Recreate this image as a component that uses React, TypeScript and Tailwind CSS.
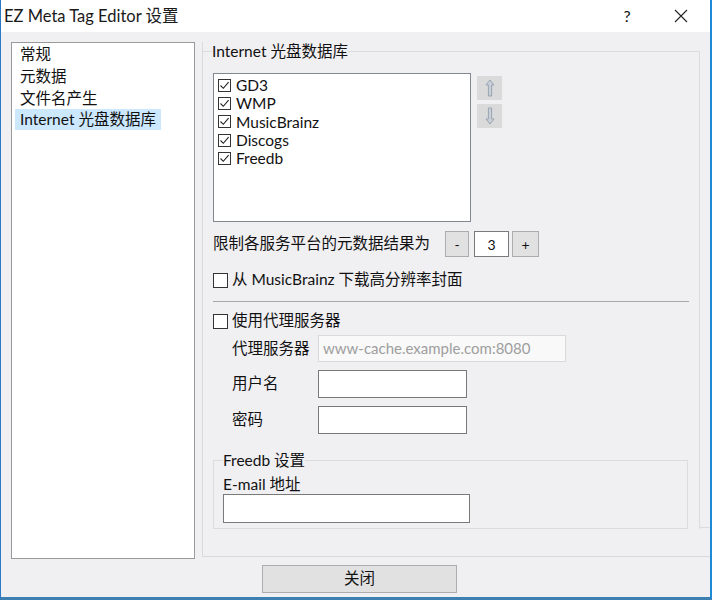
import React from "react";

const ui = "font-['Lato','Noto_Sans_CJK_SC',sans-serif]";

function CheckBox({checked, size}: {checked?: boolean; size: number}) {
	return (
		<span
			className="flex items-center justify-center bg-white border border-[#333333] shrink-0"
			style={{width: size, height: size}}>
			{checked && (
				<svg width={size - 2} height={size - 2} viewBox="0 0 11 11">
					<path d="M1.5 5.5 L4.3 8.3 L9.6 2.2" fill="none" stroke="#222" strokeWidth="1.1"/>
				</svg>
			)}
		</span>
	);
}

function Arrow({down}: {down?: boolean}) {
	return (
		<svg width="10" height="18" viewBox="0 0 10 18" style={down ? {transform: "rotate(180deg)"} : undefined}>
			<path d="M5 1 L9 6 L6.6 6 L6.6 17 L3.4 17 L3.4 6 L1 6 Z" fill="#c9d0d8" stroke="#98a4b0" strokeWidth="1"/>
		</svg>
	);
}

const sources = ["GD3", "WMP", "MusicBrainz", "Discogs", "Freedb"];
const pages = ["常规", "元数据", "文件名产生"];

function App() {
	return (
		<div className={`${ui} w-[712px] h-[600px] bg-[#f0eff2] text-[15.5px] text-[#111] flex flex-col border-l border-r-2 border-b-[3px] border-l-[#2a78c8] border-r-[#1e8ad6] border-b-[#3d7fb0] overflow-hidden`}>
			{/* title bar */}
			<div className="h-[32px] shrink-0 bg-white flex items-center pl-[3px]">
				<span className="text-[16.5px] text-[#1a1a1a]">EZ Meta Tag Editor 设置</span>
				<div className="ml-auto flex items-center mr-[6px] gap-[8px]">
					<div className="w-[46px] h-[32px] flex items-center justify-center text-[16px]">?</div>
					<div className="w-[46px] h-[32px] flex items-center justify-center">
						<svg width="14" height="14" viewBox="0 0 14 14">
							<path d="M1 1 L13 13 M13 1 L1 13" stroke="#222" strokeWidth="1.1"/>
						</svg>
					</div>
				</div>
			</div>

			<div className="flex pl-[10px] pt-[10px]">
				{/* page list */}
				<div className="w-[184px] h-[517px] shrink-0 bg-white border border-[#9a9a9a] flex flex-col items-start">
					{pages.map((p) => (
						<div key={p} className="h-[22px] leading-[22px] pl-[8px]">{p}</div>
					))}
					<div className="h-[21px] leading-[21px] ml-[3px] px-[5px] bg-[#cce8ff]">Internet 光盘数据库</div>
				</div>

				{/* right panel */}
				<div className="ml-[7px] flex-1 h-[515px] border-l border-b border-[#d9d9d9] flex flex-col">
					<div className="h-[486px] flex items-start">
						<fieldset className="w-[497px] border-t border-r border-[#dcdcdc] pl-[10px]">
							<legend className="ml-[-1px] leading-[18px]">Internet 光盘数据库</legend>

							<div className="flex items-start mt-[13px]">
								<div className="w-[258px] h-[149px] bg-white border border-[#828790] pt-[2px] pl-[4px]">
									{sources.map((s) => (
										<div key={s} className="h-[18.3px] leading-[18px] flex items-center gap-[5px]">
											<CheckBox checked size={13}/>
											<span>{s}</span>
										</div>
									))}
								</div>
								<div className="ml-[6px] mt-[3px] flex flex-col gap-[4px]">
									<div className="w-[25px] h-[24px] bg-[#dadada] flex items-center justify-center"><Arrow/></div>
									<div className="w-[25px] h-[24px] bg-[#dadada] flex items-center justify-center"><Arrow down/></div>
								</div>
							</div>

							<div className="flex items-center h-[26px] mt-[9px]">
								<span className="w-[232px] whitespace-nowrap">限制各服务平台的元数据结果为</span>
								<div className="w-[24px] h-[26px] bg-[#e1e1e1] border border-[#adadad] flex items-center justify-center text-[14px]">-</div>
								<div className="ml-[5px] w-[35px] h-[26px] bg-white border border-[#7a7a7a] flex items-center justify-center text-[14px]">3</div>
								<div className="ml-[3px] w-[27px] h-[26px] bg-[#e1e1e1] border border-[#adadad] flex items-center justify-center text-[14px]">+</div>
							</div>

							<div className="flex items-center h-[20px] mt-[13px] gap-[4px]">
								<CheckBox size={15}/>
								<span>从 MusicBrainz 下载高分辨率封面</span>
							</div>

							<div className="mt-[11px] w-[476px] border-t border-[#a8a8a8]"/>

							<div className="flex items-center h-[20px] mt-[9px] gap-[4px]">
								<CheckBox size={15}/>
								<span>使用代理服务器</span>
							</div>

							<div className="pl-[19px]">
								<div className="flex items-center mt-[4px]">
									<span className="w-[86px]">代理服务器</span>
									<div className="w-[248px] h-[27px] bg-[#f9f9f9] border border-[#d9d9d9] flex items-center pl-[4px] text-[#9e9e9e] text-[15px]">www-cache.example.com:8080</div>
								</div>
								<div className="flex items-center mt-[8px]">
									<span className="w-[86px]">用户名</span>
									<div className="w-[149px] h-[28px] bg-white border border-[#7a7a7a]"/>
								</div>
								<div className="flex items-center mt-[8px]">
									<span className="w-[86px]">密码</span>
									<div className="w-[149px] h-[28px] bg-white border border-[#7a7a7a]"/>
								</div>
							</div>

							<fieldset className="mt-[17px] w-[475px] border border-[#dcdcdc] px-[9px] pb-[5px]">
								<legend className="leading-[18px]">Freedb 设置</legend>
								<div className="leading-[18px] mt-[6px]">E-mail 地址</div>
								<div className="mt-[1px] w-[247px] h-[29px] bg-white border border-[#7a7a7a]"/>
							</fieldset>
						</fieldset>
						<div className="self-end flex-1 border-b border-[#dcdcdc]"/>
					</div>
				</div>
			</div>

			<div className="pl-[261px] mt-[6px]">
				<div className="w-[195px] h-[28px] bg-[#e1e1e1] border border-[#adadad] flex items-center justify-center">关闭</div>
			</div>
		</div>
	);
}

export default App;
